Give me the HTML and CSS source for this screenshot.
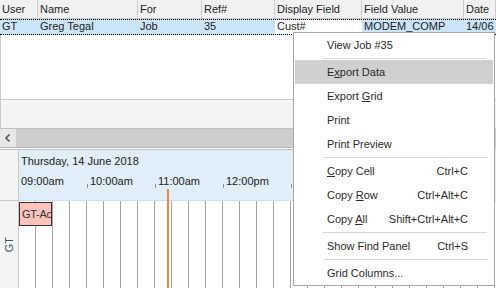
FILE: index.html
```html
<!DOCTYPE html>
<html>
<head>
<meta charset="utf-8">
<link rel="stylesheet" href="styles.css">
</head>
<body>
<div class="app">
  <div class="grid">
    <div class="ghead">
      <div class="c c-user">User</div>
      <div class="c c-name">Name</div>
      <div class="c c-for">For</div>
      <div class="c c-ref">Ref#</div>
      <div class="c c-disp">Display Field</div>
      <div class="c c-val">Field Value</div>
      <div class="c c-date">Date</div>
    </div>
    <div class="grow">
      <div class="c c-user">GT</div>
      <div class="c c-name">Greg Tegal</div>
      <div class="c c-for">Job</div>
      <div class="c c-ref">35</div>
      <div class="c c-disp focus">Cust#</div>
      <div class="c c-val">MODEM_COMP</div>
      <div class="c c-date">14/06</div>
    </div>
    <div class="gempty"></div>
    <div class="gfoot"></div>
    <div class="hscroll">
      <div class="sbtn">
        <svg width="16" height="18" viewBox="0 0 16 18"><path d="M9.5 5.5 L6 9 L9.5 12.5" fill="none" stroke="#555" stroke-width="1.6"/></svg>
      </div>
    </div>
  </div>

  <div class="sched">
    <div class="sres">
      <div class="sres-head"></div>
      <div class="sres-body"><span class="vtext">GT</span></div>
    </div>
    <div class="smain">
      <div class="shead">
        <div class="sdate">Thursday, 14 June 2018</div>
        <div class="stimes">
          <div class="hr first">09:00am</div>
          <div class="hr">10:00am</div>
          <div class="hr">11:00am</div>
          <div class="hr">12:00pm</div>
          <div class="hr">01:00pm</div>
          <div class="hr">02:00pm</div>
          <div class="hr">03:00pm</div>
        </div>
      </div>
      <div class="sbody">
        <div class="slot"></div><div class="slot"></div><div class="slot"></div><div class="slot"></div>
        <div class="slot"></div><div class="slot"></div><div class="slot"></div><div class="slot"></div>
        <div class="slot"></div><div class="slot"></div><div class="slot"></div><div class="slot"></div>
        <div class="slot"></div><div class="slot"></div><div class="slot"></div><div class="slot"></div>
        <div class="slot"></div><div class="slot"></div><div class="slot"></div><div class="slot"></div>
        <div class="slot"></div><div class="slot"></div><div class="slot"></div><div class="slot"></div>
        <div class="slot"></div><div class="slot"></div><div class="slot"></div><div class="slot"></div>
        <div class="appt">GT-Ac</div>
      </div>
      <div class="now"></div>
    </div>
  </div>

  <div class="menu">
    <div class="mi"><span>View Job #35</span></div>
    <div class="msep"></div>
    <div class="mi hot"><span>E<u>x</u>port Data</span></div>
    <div class="mi"><span>Export <u>G</u>rid</span></div>
    <div class="mi"><span>Print</span></div>
    <div class="mi"><span>Print Preview</span></div>
    <div class="msep"></div>
    <div class="mi"><span><u>C</u>opy Cell</span><span class="sc">Ctrl+C</span></div>
    <div class="mi"><span>Copy <u>R</u>ow</span><span class="sc">Ctrl+Alt+C</span></div>
    <div class="mi"><span>Copy <u>A</u>ll</span><span class="sc">Shift+Ctrl+Alt+C</span></div>
    <div class="msep"></div>
    <div class="mi"><span>Show Find Panel</span><span class="sc">Ctrl+S</span></div>
    <div class="msep"></div>
    <div class="mi"><span>Grid Columns...</span></div>
  </div>
</div>
</body>
</html>
```

FILE: styles.css
```css
* { box-sizing: border-box; }
html, body { margin: 0; padding: 0; background: #fff; }
body {
  font-family: "Liberation Sans", Arial, sans-serif;
  font-size: 11px;
  color: #1e1e1e;
}
.app {
  position: relative;
  width: 496px;
  height: 288px;
  overflow: hidden;
}

/* grid */
.grid { display: flex; flex-direction: column; }
.ghead {
  display: flex;
  height: 19px;
  background: #f1f1f1;
  border-bottom: 1px solid #c8c8c8;
}
.ghead .c {
  border-right: 1px solid #cdcdcd;
  padding-left: 2px;
  line-height: 18px;
}
.c { flex: none; white-space: nowrap; overflow: hidden; }
.c-user { width: 38px; }
.c-name { width: 100px; }
.c-for { width: 64px; }
.c-ref { width: 73px; }
.c-disp { width: 87px; }
.c-val { width: 102px; }
.c-date { width: 32px; }
.grow {
  display: flex;
  height: 16px;
  background: #cce4f7;
  border-top: 1px dotted #000;
  border-bottom: 1px dotted #000;
}
.grow .c { padding-left: 2px; line-height: 13px; }
.grow .focus { background: #fff; }
.gempty {
  height: 65px;
  border-left: 1px solid #c8c8c8;
  border-bottom: 1px solid #c8c8c8;
}
.gfoot {
  height: 28px;
  background: #f4f4f4;
  border-left: 1px solid #c8c8c8;
}
.hscroll {
  height: 20px;
  background: #cdcdcd;
  border-top: 1px solid #c0c0c0;
  border-bottom: 1px solid #b8b8b8;
  display: flex;
}
.sbtn {
  width: 16px;
  height: 18px;
  background: #e8e8e8;
}
.sbtn svg { display: block; }

/* scheduler */
.sched {
  display: flex;
  margin-top: 1px;
  height: 139px;
  border-top: 1px solid #c0c0c0;
}
.sres {
  width: 19px;
  flex: none;
  display: flex;
  flex-direction: column;
  background: #f4f4f4;
  border-right: 1px solid #c8c8c8;
}
.sres-head {
  height: 51px;
  border-bottom: 1px solid #c8c8c8;
}
.sres-body {
  flex: 1;
  display: flex;
  align-items: center;
  justify-content: center;
}
.vtext {
  writing-mode: vertical-rl;
  transform: rotate(180deg);
  color: #3a526c;
  font-size: 11px;
}
.smain {
  position: relative;
  flex: 1;
  display: flex;
  flex-direction: column;
}
.shead {
  height: 51px;
  background: #dfeef9;
  border-bottom: 1px solid #cfe0ec;
  padding-top: 3px;
}
.sdate {
  line-height: 16px;
  padding-left: 2px;
  color: #222;
}
.stimes {
  display: flex;
  margin-top: 5px;
}
.hr {
  position: relative;
  width: 68px;
  flex: none;
  line-height: 14px;
  padding-left: 3px;
  white-space: nowrap;
  color: #222;
}
.hr.first { padding-left: 2px; }
.hr::before {
  content: "";
  position: absolute;
  left: 0;
  bottom: 0;
  width: 1px;
  height: 4px;
  background: #909090;
}
.hr.first::before { display: none; }
.sbody {
  position: relative;
  flex: 1;
  display: flex;
}
.slot {
  width: 17px;
  flex: none;
  border-right: 1px solid #a4a4a4;
}
.appt {
  position: absolute;
  left: 0;
  top: 1px;
  width: 33px;
  height: 24px;
  background: #ffc3bb;
  border: 1px solid #333;
  padding-left: 2px;
  line-height: 22px;
  white-space: nowrap;
  overflow: hidden;
  color: #333;
  letter-spacing: -0.3px;
}
.now {
  position: absolute;
  left: 148px;
  top: 39px;
  bottom: 0;
  width: 2px;
  background: #f4843e;
}

/* context menu */
.menu {
  position: absolute;
  left: 293px;
  top: 32px;
  width: 202px;
  background: #fff;
  border: 1px solid #a6a6a6;
  color: #2a2a2a;
}
.mi {
  display: flex;
  justify-content: space-between;
  height: 24px;
  line-height: 24px;
  margin: 0 1px;
  padding-left: 32px;
  padding-right: 25px;
  white-space: nowrap;
}
.mi.hot { background: #d0d0d0; }
.mi u { text-decoration-thickness: 1px; text-underline-offset: 1px; }
.msep {
  height: 3px;
  margin: 0 7px 0 29px;
  padding-top: 1px;
}
.msep::after {
  content: "";
  display: block;
  height: 1px;
  background: #d6d6d6;
}
```
